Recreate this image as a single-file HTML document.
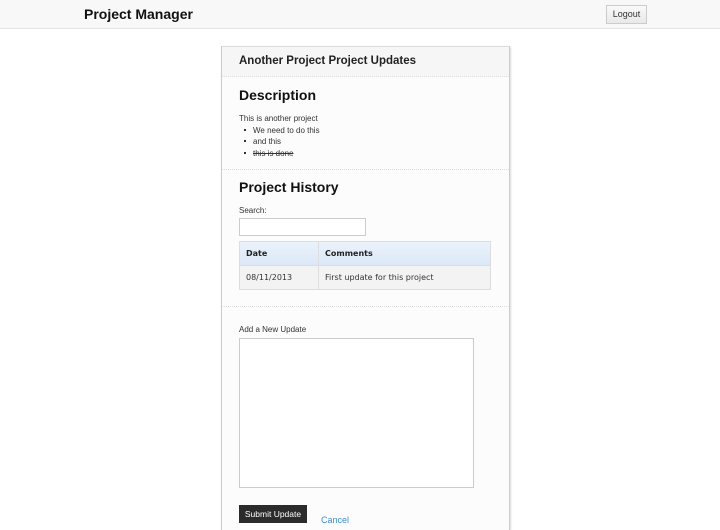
<!DOCTYPE html>
<html style="overflow:hidden;width:720px;height:530px"><head><style>
*{box-sizing:border-box;margin:0;padding:0}
body{width:720px;height:530px;overflow:hidden;background:#fff;font-family:"Liberation Sans",Arial,sans-serif;color:#222;position:relative}
.top{position:absolute;left:0;top:0;width:720px;height:29px;background:#f8f8f8;border-bottom:1px solid #e4e4e4}
.brand{position:absolute;left:84px;top:6px;font-size:14px;font-weight:bold;color:#111}
.logout{position:absolute;left:606px;top:5px;width:41px;height:19px;border:1px solid #ccc;background:linear-gradient(#fafafa,#e9e9e9);font-size:9px;text-align:center;line-height:17px;color:#333}
.panel{position:absolute;left:221px;top:46px;width:289px;height:484px;background:#fcfcfc;border:1px solid #ccc;border-bottom:none;border-top-color:#ddd;box-shadow:1px 1px 2px rgba(0,0,0,.15)}
.ph{position:absolute;left:0;top:0;width:287px;height:30px;background:#f6f6f6;border-bottom:1px dotted #ddd}
.ph b{position:absolute;left:17px;top:8px;font-size:11.5px}
.abs{position:absolute}
h2{font-size:14px;font-weight:bold;color:#111}
.sm{font-size:8px;color:#333}
.dot{position:absolute;left:0;width:287px;border-top:1px dotted #ddd}
ul{list-style:none}
li{position:relative;padding-left:14px;height:11.5px}
li:before{content:"";position:absolute;left:5px;top:4px;width:2px;height:2px;background:#333}
table{border-collapse:collapse;font-family:"DejaVu Sans",sans-serif;font-size:8px}
td{border:1px solid #ddd;padding:0 6px;color:#333}
</style></head><body>
<div class="top"><div class="brand">Project Manager</div><div class="logout">Logout</div></div>
<div class="panel">
<div class="ph"><b>Another Project Project Updates</b></div>
<h2 class="abs" style="left:17px;top:40px">Description</h2>
<div class="abs sm" style="left:17px;top:66px;line-height:11.5px">This is another project
<ul><li>We need to do this</li><li>and this</li><li style="text-decoration:line-through">this is done</li></ul></div>
<div class="dot" style="top:122px"></div>
<h2 class="abs" style="left:17px;top:132px">Project History</h2>
<div class="abs sm" style="left:17px;top:159px">Search:</div>
<div class="abs" style="left:17px;top:171px;width:127px;height:18px;background:#fff;border:1px solid #ccc"></div>
<table class="abs" style="left:17px;top:194px;width:252px">
<tr style="height:24px;background:linear-gradient(#eaf2fb,#dbe8f7);font-weight:bold"><td style="width:79px;color:#222">Date</td><td style="color:#222">Comments</td></tr>
<tr style="height:24px;background:#f3f3f3"><td>08/11/2013</td><td>First update for this project</td></tr>
</table>
<div class="dot" style="top:259px"></div>
<div class="abs sm" style="left:17px;top:278px">Add a New Update</div>
<div class="abs" style="left:17px;top:291px;width:235px;height:150px;background:#fff;border:1px solid #ccc"></div>
<div class="abs" style="left:17px;top:458px;width:68px;height:18px;background:#2b2b2b;color:#fff;font-size:8.5px;text-align:center;line-height:18px">Submit Update</div>
<div class="abs" style="left:99px;top:468px;font-size:9px;color:#3a8ed8">Cancel</div>
</div>
</body></html>
